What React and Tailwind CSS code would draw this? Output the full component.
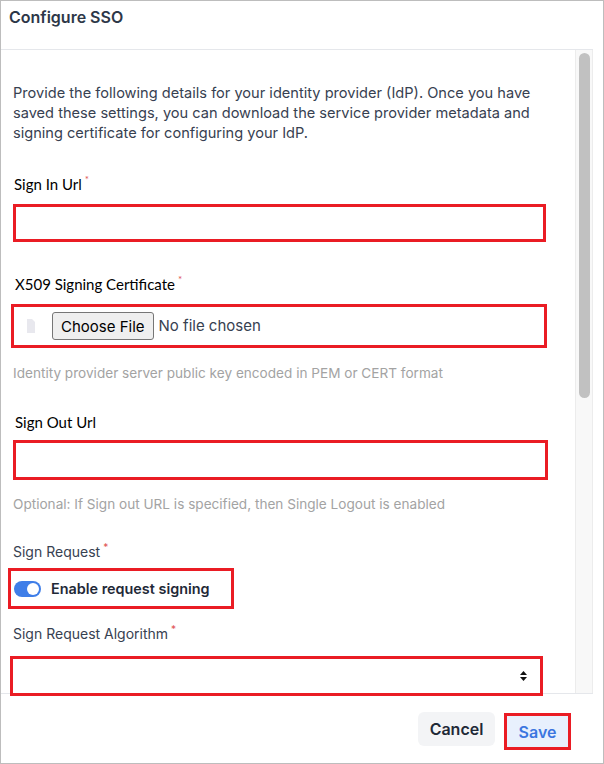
export default function App() {
	return (
		<div className="w-[604px] h-[764px] bg-white border border-[#bdbdbd] flex flex-col font-['Inter',sans-serif] text-[#374151]">
			<div className="h-[48px] shrink-0 pl-[8px] pt-[5px] pr-[11px]">
				<h1 className="text-[16px] leading-[22px] font-semibold text-[#2d3748]">
					Configure SSO
				</h1>
			</div>
			<div className="h-[645px] shrink-0 mr-[10px] border-t border-b border-[#e5e7eb] flex">
				<div className="flex-1">
					<p className="mt-[33px] pl-[12px] text-[14.6px] leading-[20px] text-[#374151]">
						Provide the following details for your identity provider (IdP). Once you have
						<br />
						saved these settings, you can download the service provider metadata and
						<br />
						signing certificate for configuring your IdP.
					</p>

					<Label className="mt-[31px] ml-[13px]" legacy required>
						Sign In Url
					</Label>
					<div className="mt-[10px] ml-[12px] w-[533px] h-[38px] border-[3px] border-[#ea1c24] bg-white" />

					<Label className="mt-[32px] ml-[14px]" legacy required>
						X509 Signing Certificate
					</Label>
					<div className="mt-[10px] ml-[10px] w-[536px] h-[44px] border-[3px] border-[#ea1c24] bg-white flex items-center">
						<svg width="8" height="14" viewBox="0 0 8 14" className="ml-[13px]">
							<path d="M0 0H5L8 3V14H0Z" fill="#e8e8ee" />
						</svg>
						<button className="ml-[17px] h-[28px] px-[8px] bg-[#efefef] border border-[#767676] rounded-[3px] text-[15px] text-black leading-none">
							Choose File
						</button>
						<span className="ml-[5px] text-[15px] text-[#374151]">No file chosen</span>
					</div>
					<Hint className="mt-[15px]">
						Identity provider server public key encoded in PEM or CERT format
					</Hint>

					<Label className="mt-[29px] ml-[14px]" legacy>
						Sign Out Url
					</Label>
					<div className="mt-[8px] ml-[12px] w-[535px] h-[40px] border-[3px] border-[#ea1c24] bg-white" />
					<Hint className="mt-[14px]">
						Optional: If Sign out URL is specified, then Single Logout is enabled
					</Hint>

					<Label className="mt-[28px] ml-[12px]" required>
						Sign Request
					</Label>
					<div className="mt-[6px] ml-[7px] w-[226px] h-[41px] border-[3px] border-[#ea1c24] flex items-center">
						<div className="ml-[3px] w-[27px] h-[16px] rounded-full bg-[#3f7ee8] flex items-center justify-end pr-[2px]">
							<div className="w-[12px] h-[12px] rounded-full bg-white" />
						</div>
						<span className="ml-[10px] text-[14.4px] font-semibold text-[#1f2937]">
							Enable request signing
						</span>
					</div>

					<Label className="mt-[15px] ml-[12px]" required>
						Sign Request Algorithm
					</Label>
					<div className="mt-[12px] ml-[9px] w-[533px] h-[40px] border-[3px] border-[#ea1c24] bg-white flex items-center justify-end pr-[13px]">
						<svg width="7" height="10" viewBox="0 0 7 10">
							<path d="M3.5 0L7 4H0Z M0 6H7L3.5 10Z" fill="#111" />
						</svg>
					</div>
				</div>
				<div className="w-[18px] bg-[#f8f8f8] border-l border-r border-[#ececec] pt-[3px] flex justify-center">
					<div className="w-[11px] h-[345px] rounded-full bg-[#c1c1c1]" />
				</div>
			</div>
			<div className="flex items-start pt-[18px] pl-[417px]">
				<button className="w-[77px] h-[34px] rounded-md bg-[#f3f4f6] text-[16px] font-semibold text-[#1f2937]">
					Cancel
				</button>
				<div className="ml-[9px] mt-[1px] w-[67px] h-[37px] border-[3px] border-[#ea1c24] bg-[#e8f0fd] flex items-center justify-center">
					<span className="text-[16px] font-semibold text-[#3b76e0]">Save</span>
				</div>
			</div>
		</div>
	);
}

function Label({ children, className, legacy, required }) {
	return (
		<div
			className={`${className} leading-[20px] ${
				legacy ? "text-[15px] font-['Lato',sans-serif] text-black" : "text-[14px] text-[#374151]"
			}`}
		>
			{children}
			{required && (
				<span className="ml-[3px] text-[10px] align-top leading-none text-[#e05252]">*</span>
			)}
		</div>
	);
}

function Hint({ children, className }) {
	return (
		<p className={`${className} pl-[12px] text-[13.6px] leading-[20px] text-[#a3a3a3]`}>
			{children}
		</p>
	);
}
